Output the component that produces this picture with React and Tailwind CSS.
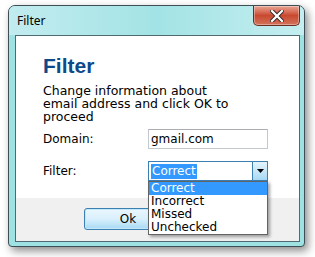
import React from "react";

const options = ["Correct", "Incorrect", "Missed", "Unchecked"];

const CloseButton = () => (
  <div className="w-[47px] h-[20px] rounded-b-[5px] border border-[#6b2c22] border-t-0 bg-gradient-to-b from-[#e8a493] via-[#c9482f] to-[#d1735a] flex items-center justify-center shadow-[inset_0_0_0_1px_rgba(255,255,255,0.35)]">
    <svg width="14" height="12" viewBox="0 0 14 12">
      <path d="M2 1 L12 11 M12 1 L2 11" stroke="#3a2b2b" strokeWidth="4.2" strokeLinecap="square" />
      <path d="M2 1 L12 11 M12 1 L2 11" stroke="#ffffff" strokeWidth="2.2" strokeLinecap="square" />
    </svg>
  </div>
);

const App = () => {
  return (
    <div className="w-[315px] h-[257px] bg-white overflow-hidden" style={{ fontFamily: '"DejaVu Sans", Verdana, sans-serif' }}>
      <div className="ml-[8px] mt-[5px] w-[297px] h-[242px] rounded-t-[7px] rounded-b-[4px] border border-[#3d4f55] bg-[#9fe2e4] shadow-[3px_4px_8px_rgba(0,0,0,0.45)] flex flex-col">
        {/* title bar */}
        <div className="h-[29px] flex items-start rounded-t-[6px] bg-gradient-to-r from-[#c2ecef] via-[#a3e3e5] to-[#c4eef0]">
          <span className="ml-[8px] mt-[8px] text-[12px] leading-[14px] text-black" style={{ fontFamily: '"Noto Sans", "Open Sans", sans-serif' }}>
            Filter
          </span>
          <div className="ml-auto mr-[4px]">
            <CloseButton />
          </div>
        </div>

        {/* client area */}
        <div className="ml-[6px] mr-[4px] mb-[4px] flex-1 border border-[#4f6a70] bg-[#f0f0f0] flex flex-col relative">
          <div className="h-[162px] bg-white pl-[27px] flex flex-col">
            <h1 className="mt-[18px] text-[21px] leading-[24px] font-bold text-[#0d4a8a]" style={{ fontFamily: '"Liberation Sans", Arial, sans-serif' }}>
              Filter
            </h1>
            <p className="mt-[6px] text-[12.5px] leading-[13px] text-black">
              Change information about
              <br />
              email address and click OK to
              <br />
              proceed
            </p>
            <div className="mt-[6px] flex items-center h-[20px]">
              <span className="w-[105px] text-[12px] text-black">Domain:</span>
              <div className="w-[120px] h-[20px] border border-[#c3c8d0] border-t-[#abadb3] bg-white flex items-center pl-[2px] text-[12px] text-black">
                gmail.com
              </div>
            </div>
            <div className="mt-[12px] flex items-center h-[20px]">
              <span className="w-[105px] text-[12px] text-black">Filter:</span>
              <div className="w-[120px] h-[20px] border border-[#3c7fb1] bg-white flex items-center relative">
                <span className="ml-[2px] px-[1px] bg-[#3399ff] text-white text-[12px] leading-[15px]">Correct</span>
                <div className="ml-auto w-[15px] h-[18px] border-l border-[#3c7fb1] bg-gradient-to-b from-[#e5f4fc] to-[#a7d9f5] flex items-center justify-center">
                  <svg width="7" height="4" viewBox="0 0 7 4">
                    <path d="M0 0 L7 0 L3.5 4 Z" fill="#000" />
                  </svg>
                </div>
                {/* open list */}
                <div className="absolute left-[-1px] top-[19px] w-[120px] border border-[#646464] bg-white shadow-[2px_2px_3px_rgba(0,0,0,0.35)] z-10">
                  {options.map((o, i) => (
                    <div
                      key={o}
                      className={`h-[13px] pl-[2px] text-[12px] leading-[13px] ${i === 0 ? "bg-[#3399ff] text-white" : "text-black"}`}
                    >
                      {o}
                    </div>
                  ))}
                </div>
              </div>
            </div>
          </div>
          {/* button strip */}
          <div className="flex-1 flex items-start pl-[68px] pt-[10px]">
            <button className="w-[88px] h-[22px] rounded-[3px] border border-[#3c7fb1] bg-gradient-to-b from-[#eaf6fd] via-[#d9f0fc] to-[#a7d9f5] text-[12px] text-black shadow-[inset_0_0_0_1px_#c5e7fa]">
              Ok
            </button>
          </div>
        </div>
      </div>
    </div>
  );
};

export default App;
